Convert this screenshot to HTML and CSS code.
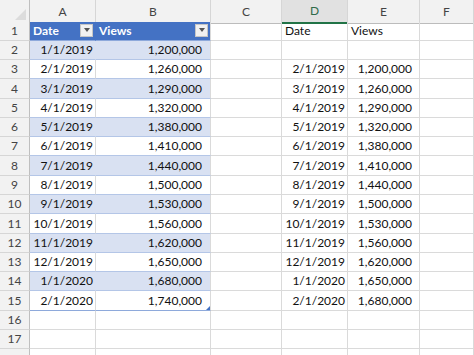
FILE: index.html
```html
<!DOCTYPE html>
<html>
<head>
<meta charset="UTF-8" />
<title>Views by month</title>
<link rel="stylesheet" href="styles.css">
</head>
<body>
<div class="sheet">
	<div class="row head">
		<div class="c corner"></div>
		<div class="c">A</div>
		<div class="c">B</div>
		<div class="c">C</div>
		<div class="c sel">D</div>
		<div class="c">E</div>
		<div class="c">F</div>
	</div>
	<div class="row">
		<div class="c rn">1</div>
		<div class="c th">Date<span class="dd"></span></div>
		<div class="c th">Views<span class="dd"></span></div>
		<div class="c"></div>
		<div class="c">Date</div>
		<div class="c">Views</div>
		<div class="c"></div>
	</div>
	<div class="row band">
		<div class="c rn">2</div>
		<div class="c r t">1/1/2019</div>
		<div class="c r t num">1,200,000</div>
		<div class="c"></div>
		<div class="c"></div>
		<div class="c"></div>
		<div class="c"></div>
	</div>
	<div class="row">
		<div class="c rn">3</div>
		<div class="c r t">2/1/2019</div>
		<div class="c r t num">1,260,000</div>
		<div class="c"></div>
		<div class="c r">2/1/2019</div>
		<div class="c r num2">1,200,000</div>
		<div class="c"></div>
	</div>
	<div class="row band tall">
		<div class="c rn">4</div>
		<div class="c r t">3/1/2019</div>
		<div class="c r t num">1,290,000</div>
		<div class="c"></div>
		<div class="c r">3/1/2019</div>
		<div class="c r num2">1,260,000</div>
		<div class="c"></div>
	</div>
	<div class="row">
		<div class="c rn">5</div>
		<div class="c r t">4/1/2019</div>
		<div class="c r t num">1,320,000</div>
		<div class="c"></div>
		<div class="c r">4/1/2019</div>
		<div class="c r num2">1,290,000</div>
		<div class="c"></div>
	</div>
	<div class="row band">
		<div class="c rn">6</div>
		<div class="c r t">5/1/2019</div>
		<div class="c r t num">1,380,000</div>
		<div class="c"></div>
		<div class="c r">5/1/2019</div>
		<div class="c r num2">1,320,000</div>
		<div class="c"></div>
	</div>
	<div class="row">
		<div class="c rn">7</div>
		<div class="c r t">6/1/2019</div>
		<div class="c r t num">1,410,000</div>
		<div class="c"></div>
		<div class="c r">6/1/2019</div>
		<div class="c r num2">1,380,000</div>
		<div class="c"></div>
	</div>
	<div class="row band tall">
		<div class="c rn">8</div>
		<div class="c r t">7/1/2019</div>
		<div class="c r t num">1,440,000</div>
		<div class="c"></div>
		<div class="c r">7/1/2019</div>
		<div class="c r num2">1,410,000</div>
		<div class="c"></div>
	</div>
	<div class="row">
		<div class="c rn">9</div>
		<div class="c r t">8/1/2019</div>
		<div class="c r t num">1,500,000</div>
		<div class="c"></div>
		<div class="c r">8/1/2019</div>
		<div class="c r num2">1,440,000</div>
		<div class="c"></div>
	</div>
	<div class="row band">
		<div class="c rn">10</div>
		<div class="c r t">9/1/2019</div>
		<div class="c r t num">1,530,000</div>
		<div class="c"></div>
		<div class="c r">9/1/2019</div>
		<div class="c r num2">1,500,000</div>
		<div class="c"></div>
	</div>
	<div class="row tall">
		<div class="c rn">11</div>
		<div class="c r t">10/1/2019</div>
		<div class="c r t num">1,560,000</div>
		<div class="c"></div>
		<div class="c r">10/1/2019</div>
		<div class="c r num2">1,530,000</div>
		<div class="c"></div>
	</div>
	<div class="row band">
		<div class="c rn">12</div>
		<div class="c r t">11/1/2019</div>
		<div class="c r t num">1,620,000</div>
		<div class="c"></div>
		<div class="c r">11/1/2019</div>
		<div class="c r num2">1,560,000</div>
		<div class="c"></div>
	</div>
	<div class="row">
		<div class="c rn">13</div>
		<div class="c r t">12/1/2019</div>
		<div class="c r t num">1,650,000</div>
		<div class="c"></div>
		<div class="c r">12/1/2019</div>
		<div class="c r num2">1,620,000</div>
		<div class="c"></div>
	</div>
	<div class="row band">
		<div class="c rn">14</div>
		<div class="c r t">1/1/2020</div>
		<div class="c r t num">1,680,000</div>
		<div class="c"></div>
		<div class="c r">1/1/2020</div>
		<div class="c r num2">1,650,000</div>
		<div class="c"></div>
	</div>
	<div class="row tall last">
		<div class="c rn">15</div>
		<div class="c r t">2/1/2020</div>
		<div class="c r t num grip">1,740,000</div>
		<div class="c"></div>
		<div class="c r">2/1/2020</div>
		<div class="c r num2">1,680,000</div>
		<div class="c"></div>
	</div>
	<div class="row">
		<div class="c rn">16</div>
		<div class="c"></div><div class="c"></div><div class="c"></div><div class="c"></div><div class="c"></div><div class="c"></div>
	</div>
	<div class="row">
		<div class="c rn">17</div>
		<div class="c"></div><div class="c"></div><div class="c"></div><div class="c"></div><div class="c"></div><div class="c"></div>
	</div>
	<div class="row">
		<div class="c rn"></div>
		<div class="c"></div><div class="c"></div><div class="c"></div><div class="c"></div><div class="c"></div><div class="c"></div>
	</div>
</div>
</body>
</html>
```

FILE: styles.css
```css
body{margin:0;background:#fff;font-family:Lato,"Noto Sans",sans-serif;font-size:12px;color:#111;overflow:hidden;}
.sheet{width:474px;height:355px;overflow:hidden;}
.row{display:grid;grid-template-columns:30px 66px 115px 71px 66px 72px 54px;height:19px;}
.row.tall{height:20px;}
.row.head{height:22px;}
.c{box-sizing:border-box;display:flex;align-items:flex-end;padding:0 3px 2px 3px;line-height:14px;white-space:nowrap;border-right:1px solid #dadada;border-bottom:1px solid #dadada;position:relative;}
.r{justify-content:flex-end;padding-right:2px;}
.num{padding-right:8px;}
.num2{padding-right:7px;}
.rn{justify-content:center;padding:0 0 2px 0;background:#f2f2f2;color:#444;border-right-color:#bfbfbf;border-bottom-color:#d6d6d6;}

/* column letters */
.head .c{align-items:center;justify-content:center;padding:0;line-height:22px;background:#f2f2f2;color:#444;border-right-color:#d6d6d6;border-bottom-color:#bcbcbc;}
.head .sel{background:#e1e1e1;color:#2f6b49;border-bottom:2px solid #217346;}
.head .corner{border-right-color:#bfbfbf;}
.corner::after{content:"";position:absolute;right:3px;bottom:3px;border-style:solid;border-width:0 0 11px 11px;border-color:transparent transparent #dcdcdc transparent;}

/* table */
.th{background:#4472c4;color:#fff;font-weight:bold;justify-content:space-between;align-items:center;padding:0 2px 0 3px;border-right-color:#4472c4;border-bottom-color:#8ea9db;}
.th + .th{border-right-color:#dadada;}
.dd{width:13px;height:13px;box-sizing:border-box;background:#f1f1f1;border:1px solid #c6c6c6;display:flex;align-items:center;justify-content:center;margin-top:-2px;}
.dd::after{content:"";border-style:solid;border-width:4px 3px 0 3px;border-color:#555 transparent transparent transparent;}
.t{border-bottom-color:#b4c6e7;}
.band .t{background:#d9e1f2;}
.band .rn + .t{border-right-color:#d9e1f2;}
.last .t{border-bottom-color:#8ea9db;}
.grip::after{content:"";position:absolute;right:0;bottom:0;border-style:solid;border-width:0 0 4px 4px;border-color:transparent transparent #4472c4 transparent;}
```
